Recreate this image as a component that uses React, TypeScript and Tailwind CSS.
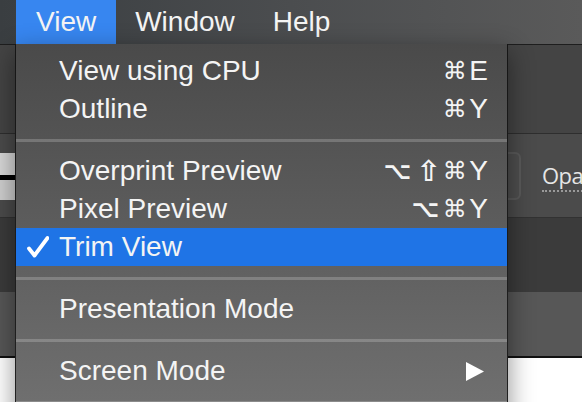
import React from 'react';

type MenuEntry =
  | { type: 'item'; label: string; keys?: string[]; checked?: boolean; active?: boolean; submenu?: boolean }
  | { type: 'sep' };

const entries: MenuEntry[] = [
  { type: 'item', label: 'View using CPU', keys: ['⌘', 'E'] },
  { type: 'item', label: 'Outline', keys: ['⌘', 'Y'] },
  { type: 'sep' },
  { type: 'item', label: 'Overprint Preview', keys: ['⌥', '⇧', '⌘', 'Y'] },
  { type: 'item', label: 'Pixel Preview', keys: ['⌥', '⌘', 'Y'] },
  { type: 'item', label: 'Trim View', checked: true, active: true },
  { type: 'sep' },
  { type: 'item', label: 'Presentation Mode' },
  { type: 'sep' },
  { type: 'item', label: 'Screen Mode', submenu: true },
  { type: 'sep' },
];

const KeyGlyph: React.FC<{ k: string }> = ({ k }) => {
  if (k === '⌘')
    return <span className="inline-flex w-[25px] justify-center font-['DejaVu_Sans',sans-serif] text-[24px]">⌘</span>;
  if (k === '⇧')
    return <span className="inline-flex w-[28px] justify-center font-['DejaVu_Sans',sans-serif] text-[29px] font-bold">⇧</span>;
  if (k === '⌥')
    return <span className="mr-[4px] inline-flex w-[26px] justify-center font-['DejaVu_Sans',sans-serif] text-[24px] font-bold">⌥</span>;
  return <span className="ml-[2px]">{k}</span>;
};

const CheckIcon = () => (
  <svg width="22" height="22" viewBox="0 0 22 22" fill="none">
    <path d="M2 12.5 L7.5 19.5 L20.5 2" stroke="white" strokeWidth="3.8" strokeLinecap="round" strokeLinejoin="round" />
  </svg>
);

const SubmenuArrow = () => (
  <svg width="18" height="19" viewBox="0 0 18 19" className="mr-[4px]">
    <polygon points="0,0 18,9.5 0,19" fill="white" />
  </svg>
);

const ViewMenu: React.FC = () => (
  <div className="absolute left-[15px] top-[44px] w-[493px] border border-t-0 border-black/70 bg-linear-to-b from-[#4a4a4a] to-[#717171] pt-[8px] pb-[6px] text-[28px] text-[#f4f4f4] shadow-[0_8px_24px_rgba(0,0,0,0.45)]">
    {entries.map((e, i) =>
      e.type === 'sep' ? (
        <div key={i} className="h-[24px] pt-[11px]">
          <div className="h-[3px] bg-white/20"></div>
        </div>
      ) : (
        <div key={i} className={`flex h-[38px] items-center pr-[19px] ${e.active ? 'bg-[#1f74e6]' : ''}`}>
          <div className="flex w-[43px] shrink-0 pl-[11px]">{e.checked && <CheckIcon />}</div>
          <span className="flex-1 leading-[38px] whitespace-nowrap">{e.label}</span>
          {e.keys && (
            <span className="flex items-center leading-[38px]">
              {e.keys.map((k, j) => (
                <KeyGlyph key={j} k={k} />
              ))}
            </span>
          )}
          {e.submenu && <SubmenuArrow />}
        </div>
      )
    )}
  </div>
);

export default function App() {
  return (
    <div className="relative flex h-[402px] w-[582px] flex-col overflow-hidden bg-white font-['Liberation_Sans',Arial,sans-serif]">
      {/* menu bar */}
      <div className="flex h-[44px] shrink-0 bg-linear-to-r from-[#3a3e41] via-[#4b4d4f] to-[#5a5a5a] pl-[16px] text-[28px] leading-[44px] text-[#f4f4f4]">
        <span className="bg-[#3786f0] px-[20px]">View</span>
        <span className="px-[19px]">Window</span>
        <span className="px-[19px]">Help</span>
      </div>
      <div className="h-[1px] shrink-0 bg-[#1e1e1e]"></div>
      {/* control bar */}
      <div className="h-[88px] shrink-0 bg-[#444444]"></div>
      <div className="h-[1px] shrink-0 bg-[#2e2e2e]"></div>
      <div className="flex h-[83px] shrink-0 items-start bg-[#4b4b4b]">
        <div className="mt-[19px] flex w-[16px] shrink-0 flex-col">
          <div className="h-[22px] bg-[#d8d8d8]"></div>
          <div className="h-[5px] bg-black"></div>
          <div className="h-[20px] bg-[#cfcfcf]"></div>
        </div>
        <div className="ml-[465px] mt-[18px] h-[48px] w-[40px] shrink-0 rounded-[6px] border-2 border-[#5a5a5a] bg-[#4e4e4e]"></div>
        <span className="ml-[21px] mt-[30px] shrink-0 whitespace-nowrap border-b-2 border-dotted border-[#9a9a9a] pb-[4px] font-['Open_Sans',sans-serif] text-[22px] leading-[22px] tracking-[-0.5px] text-[#e6e6e6]">
          Opa
        </span>
      </div>
      <div className="h-[1px] shrink-0 bg-[#323232]"></div>
      <div className="h-[74px] shrink-0 bg-[#3b3b3b]"></div>
      <div className="h-[64px] shrink-0 bg-[#575757]"></div>
      <div className="h-[2px] shrink-0 bg-[#111111]"></div>
      <div className="flex-1 bg-white"></div>
      <ViewMenu />
    </div>
  );
}
